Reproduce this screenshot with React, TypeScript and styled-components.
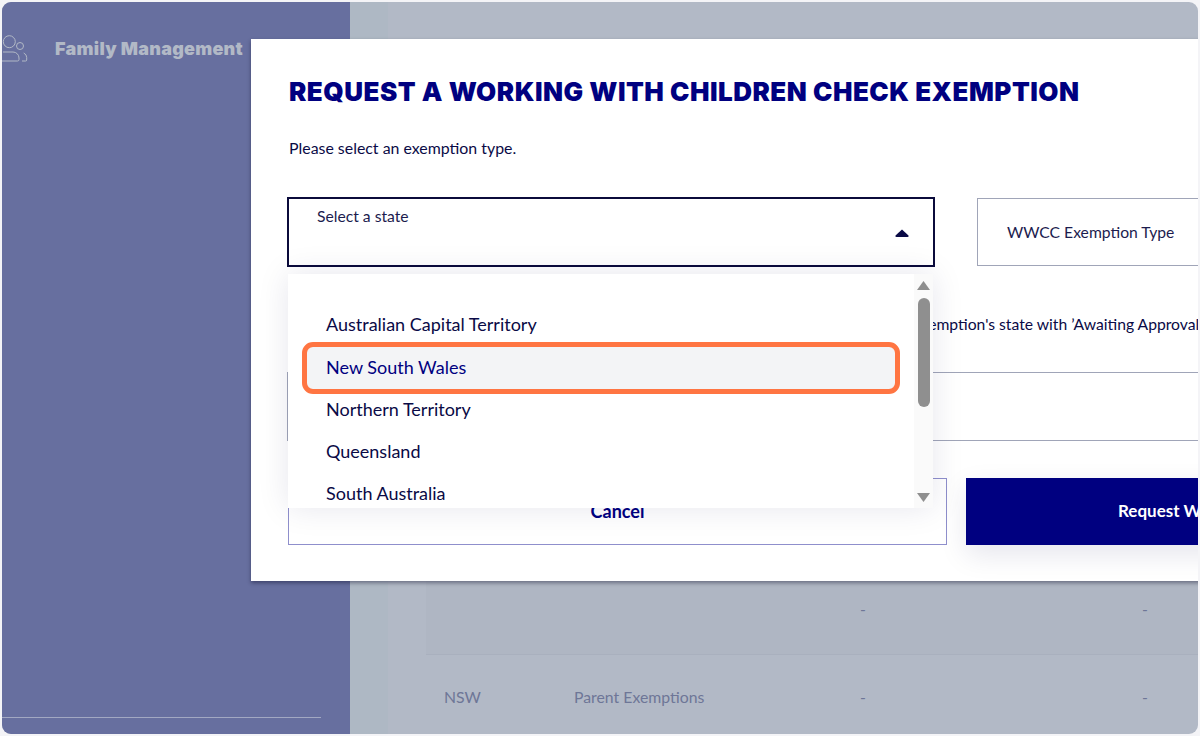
import styled, { createGlobalStyle } from "styled-components";

const GlobalStyle = createGlobalStyle`
    html, body {
        margin: 0;
        padding: 0;
        background: #f4f4f7;
    }
    * {
        box-sizing: border-box;
    }
`;

const states = [
    "Australian Capital Territory",
    "New South Wales",
    "Northern Territory",
    "Queensland",
    "South Australia",
];

const UsersIcon = () => (
    <svg width="28" height="30" viewBox="0 0 28 30" fill="none" stroke="#b2b9c6" strokeWidth="1">
        <circle cx="7.300" cy="7.700" r="6" />
        <circle cx="18" cy="12" r="3.500" />
        <path d="M-2 27H15.500a1.500 1.500 0 0 0 1.500-1.500v-1.500a6 6 0 0 0-6-6H1" />
        <path d="M20 27h3.700a1 1 0 0 0 1-1v-2.500a5 5 0 0 0-3-4.500" />
    </svg>
);

const Caret = () => (
    <svg width="14" height="8" viewBox="0 0 14 8">
        <path d="M7 0.500L13.500 6.500Q14 8 12.500 8H1.500Q0 8 .5 6.500Z" fill="#0a0a46" />
    </svg>
);

const ScrollArrow = ({ down }: { down?: boolean }) => (
    <svg width="13" height="9" viewBox="0 0 13 9">
        <path d={down ? "M0 0H13L6.500 9Z" : "M6.500 0L13 9H0Z"} fill="#8f8f8f" />
    </svg>
);

export default function App() {
    return (
        <>
            <GlobalStyle />
            <Frame>
                <Sidebar>
                    <SideHeader>
                        <UsersIcon />
                        <SideTitle>Family Management</SideTitle>
                    </SideHeader>
                    <SideLine />
                </Sidebar>
                <Strip />
                <Main>
                    <TableRow $height={90} $shaded>
                        <span />
                        <span />
                        <Cell>-</Cell>
                        <Cell>-</Cell>
                    </TableRow>
                    <TableRow $height={84}>
                        <Cell>NSW</Cell>
                        <Cell>Parent Exemptions</Cell>
                        <Cell>-</Cell>
                        <Cell>-</Cell>
                    </TableRow>
                </Main>

                <Modal>
                    <Title>REQUEST A WORKING WITH CHILDREN CHECK EXEMPTION</Title>
                    <Subtitle>Please select an exemption type.</Subtitle>
                    <SelectRow>
                        <StateSelect>
                            <SelectLabel>Select a state</SelectLabel>
                            <CaretSlot>
                                <Caret />
                            </CaretSlot>
                        </StateSelect>
                        <TypeBox>WWCC Exemption Type</TypeBox>
                    </SelectRow>
                    <InfoText>
                        Requesting this will update the exemption's state with ’Awaiting Approval’
                    </InfoText>
                    <Field />
                    <ButtonRow>
                        <CancelButton>Cancel</CancelButton>
                        <RequestButton>Request WWCC Exemption</RequestButton>
                    </ButtonRow>

                    <Dropdown>
                        <OptionList>
                            {states.map((s, i) => (
                                <Option key={s} $active={i === 1}>
                                    {s}
                                </Option>
                            ))}
                        </OptionList>
                        <ScrollTrack>
                            <ScrollArrow />
                            <ScrollThumb />
                            <ScrollArrow down />
                        </ScrollTrack>
                    </Dropdown>
                </Modal>
            </Frame>
        </>
    );
}

const Frame = styled.div`
    position: relative;
    margin: 2px;
    width: 1196px;
    height: 732px;
    display: flex;
    overflow: hidden;
    border-radius: 9px;
    background: #b2b9c6;
    font-family: "Lato", "Liberation Sans", sans-serif;
`;

const Sidebar = styled.aside`
    width: 348px;
    flex-shrink: 0;
    display: flex;
    flex-direction: column;
    justify-content: space-between;
    background: #676f9f;
    padding: 32px 0 16px;
`;

const SideHeader = styled.div`
    display: flex;
    align-items: center;
    gap: 25px;
    height: 30px;
`;

const SideTitle = styled.span`
    margin-bottom: 2px;
    font-family: "Inter", "Liberation Sans", sans-serif;
    font-size: 18px;
    font-weight: 900;
    letter-spacing: 0.25px;
    color: #b2b9c6;
    white-space: nowrap;
`;

const SideLine = styled.div`
    width: 319px;
    height: 1px;
    background: #a2a8c2;
`;

const Strip = styled.div`
    width: 38px;
    flex-shrink: 0;
    background: #aeb8c4;
`;

const Main = styled.main`
    flex: 1;
    min-width: 0;
    padding: 563px 0 0 38px;
    display: flex;
    flex-direction: column;
`;

const TableRow = styled.div<{ $height: number; $shaded?: boolean }>`
    flex-shrink: 0;
    height: ${(p) => p.$height}px;
    display: grid;
    grid-template-columns: 130px 286px 282px 100px;
    align-items: center;
    padding: 0 0 2px 18px;
    background: ${(p) => (p.$shaded ? "#afb6c3" : "transparent")};
    border-bottom: ${(p) => (p.$shaded ? "1px solid #a9b0be" : "none")};
`;

const Cell = styled.span`
    font-size: 15.800px;
    color: #6e7697;
    white-space: nowrap;
`;

const Modal = styled.section`
    position: absolute;
    left: 249px;
    top: 37px;
    width: 1400px;
    height: 542px;
    padding: 35px 0 0 36px;
    background: #ffffff;
    box-shadow: 0 2px 4px rgba(0, 0, 30, 0.4);
`;

const Title = styled.h2`
    margin: 0 0 0 2px;
    font-family: "Inter", "Liberation Sans", sans-serif;
    font-size: 26px;
    line-height: 36px;
    font-weight: 900;
    letter-spacing: 0.5px;
    color: #000080;
    white-space: nowrap;
`;

const Subtitle = styled.p`
    margin: 28px 0 0 2px;
    font-size: 15.900px;
    line-height: 20px;
    color: #0a0a46;
`;

const SelectRow = styled.div`
    margin-top: 39px;
    display: flex;
    align-items: center;
    gap: 42px;
`;

const StateSelect = styled.div`
    width: 648px;
    height: 70px;
    padding: 8px 24px 0 28px;
    border: 2px solid #0b0b3b;
    display: flex;
    justify-content: space-between;
`;

const SelectLabel = styled.span`
    font-size: 15.700px;
    line-height: 18px;
    color: #1c1c4e;
`;

const CaretSlot = styled.span`
    margin-top: 22px;
    line-height: 0;
`;

const TypeBox = styled.div`
    width: 500px;
    height: 68px;
    padding-left: 29px;
    display: flex;
    align-items: center;
    border: 1px solid #a0a5b8;
    font-size: 15.700px;
    color: #1c1c4e;
`;

const InfoText = styled.p`
    margin: 47px 0 0 410px;
    font-size: 15.700px;
    line-height: 20px;
    color: #0a0a46;
    white-space: nowrap;
`;

const Field = styled.div`
    margin-top: 38px;
    height: 69px;
    border: 1px solid #a0a5b8;
`;

const ButtonRow = styled.div`
    margin: 37px 0 0 1px;
    display: flex;
    gap: 19px;
`;

const CancelButton = styled.button`
    width: 659px;
    height: 67px;
    padding-bottom: 2px;
    background: #ffffff;
    border: 1px solid #8f8fcc;
    font-family: inherit;
    font-size: 18px;
    font-weight: 700;
    color: #000080;
`;

const RequestButton = styled.button`
    width: 659px;
    height: 67px;
    padding: 0 0 2px 152px;
    text-align: left;
    background: #000080;
    border: none;
    font-family: inherit;
    font-size: 17px;
    font-weight: 700;
    color: #ffffff;
    box-shadow: 0 10px 28px rgba(0, 0, 80, 0.1);
`;

const Dropdown = styled.div`
    position: absolute;
    left: 37px;
    top: 235px;
    width: 645px;
    height: 234px;
    display: flex;
    overflow: hidden;
    background: #ffffff;
    box-shadow: 0 0 30px rgba(0, 0, 80, 0.1);
`;

const OptionList = styled.ul`
    flex: 1;
    list-style: none;
    margin: 0;
    padding: 29px 14px 0;
`;

const Option = styled.li<{ $active?: boolean }>`
    height: ${(p) => (p.$active ? "52px" : "42px")};
    margin: ${(p) => (p.$active ? "-3px 0 -6px" : "0")};
    padding: ${(p) => (p.$active ? "0 0 2px 19px" : "0 0 0 24px")};
    display: flex;
    align-items: center;
    font-size: 18px;
    white-space: nowrap;
    color: ${(p) => (p.$active ? "#000080" : "#0a0a46")};
    background: ${(p) => (p.$active ? "#f3f4f6" : "transparent")};
    border: ${(p) => (p.$active ? "5px solid #ff7542" : "none")};
    border-radius: ${(p) => (p.$active ? "11px" : "0")};
`;

const ScrollTrack = styled.div`
    width: 19px;
    flex-shrink: 0;
    padding: 7px 3px 6px;
    display: flex;
    flex-direction: column;
    align-items: center;
    background: #fafafa;
`;

const ScrollThumb = styled.div`
    width: 12px;
    height: 109px;
    margin: 8px 0 auto;
    border-radius: 6px;
    background: #8f8f8f;
`;
